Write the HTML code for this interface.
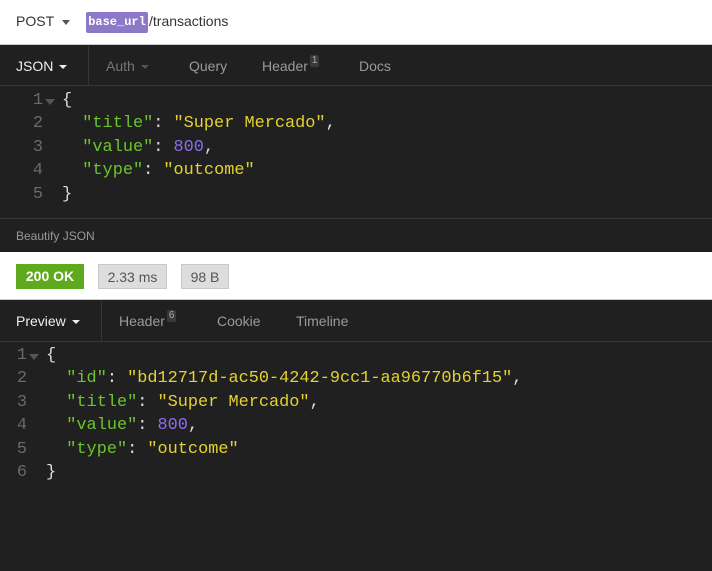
<!DOCTYPE html>
<html><head><style>
*{margin:0;padding:0;box-sizing:border-box}
body{width:712px;height:571px;overflow:hidden;background:#202020;font-family:"Liberation Sans",sans-serif;position:relative}
.abs{position:absolute}
.top{left:0;top:0;width:712px;height:45px;background:#fff;border-bottom:1px solid #ccc}
.tabs{left:0;width:712px;height:40px;border-bottom:1px solid #363636;font-size:14px;color:#9a9a9a}
.tab{position:absolute;top:0;height:40px;line-height:40px}
.act{color:#eee}
.caret{display:inline-block;width:0;height:0;border-left:4px solid transparent;border-right:4px solid transparent;border-top:4px solid currentColor;vertical-align:middle;margin-left:6px}
.badge{display:inline-block;background:#3a3a3a;color:#aaa;font-size:10px;line-height:12px;padding:0 2px;vertical-align:8px;margin-left:2px;border-radius:2px}
.code{font-family:"Liberation Mono",monospace;font-size:16.9px;line-height:23.4px;white-space:pre;color:#ddd}
.ln{color:#6a6a6a;text-align:right}
.k{color:#6cc42c}.s{color:#e3d230}.n{color:#8c6cf2}
.tri{position:absolute;width:0;height:0;border-left:5px solid transparent;border-right:5px solid transparent;border-top:6px solid #555}
.pill{position:absolute;top:264px;height:25px;line-height:25px;font-size:14px;text-align:center}
</style></head><body>
<div class="abs top">
 <span class="abs" style="left:16px;top:13px;font-size:14px;color:#333">POST</span>
 <span class="abs" style="left:62px;top:20px;width:0;height:0;border-left:4px solid transparent;border-right:4px solid transparent;border-top:5px solid #555"></span>
 <span class="abs" style="left:86px;top:12px;width:62px;height:21px;background:#8d78c8;border-radius:2px;color:#fff;font-family:'Liberation Mono',monospace;font-size:12px;font-weight:bold;line-height:21px;text-align:center">base_url</span>
 <span class="abs" style="left:149px;top:13px;font-size:14px;color:#333">/transactions</span>
</div>
<div class="abs tabs" style="top:46px">
 <div class="tab act" style="left:16px">JSON<span class="caret"></span></div>
 <div class="abs" style="left:88px;top:0;width:1px;height:40px;background:#363636"></div>
 <div class="tab" style="left:106px;color:#777">Auth<span class="caret" style="color:#555"></span></div>
 <div class="tab" style="left:189px">Query</div>
 <div class="tab" style="left:262px">Header<span class="badge">1</span></div>
 <div class="tab" style="left:359px">Docs</div>
</div>
<div class="abs code ln" style="left:0;width:43px;top:89px">1
2
3
4
5</div>
<div class="tri" style="left:45px;top:99px"></div>
<div class="abs code" style="left:62px;top:89px">{
  <span class="k">"title"</span>: <span class="s">"Super Mercado"</span>,
  <span class="k">"value"</span>: <span class="n">800</span>,
  <span class="k">"type"</span>: <span class="s">"outcome"</span>
}</div>
<div class="abs" style="left:0;top:218px;width:712px;height:34px;border-top:1px solid #363636;font-size:12px;color:#999;line-height:34px;padding-left:16px">Beautify JSON</div>
<div class="abs" style="left:0;top:252px;width:712px;height:48px;background:#fff;border-bottom:1px solid #ccc"></div>
<div class="pill" style="left:16px;width:68px;background:#5fa91f;color:#fff;font-weight:bold">200 OK</div>
<div class="pill" style="left:98px;width:69px;background:#ddd;border:1px solid #c8c8c8;color:#555">2.33 ms</div>
<div class="pill" style="left:181px;width:48px;background:#ddd;border:1px solid #c8c8c8;color:#555">98 B</div>
<div class="abs tabs" style="top:301px;height:41px">
 <div class="tab act" style="left:16px">Preview<span class="caret"></span></div>
 <div class="abs" style="left:101px;top:0;width:1px;height:41px;background:#363636"></div>
 <div class="tab" style="left:119px">Header<span class="badge">6</span></div>
 <div class="tab" style="left:217px">Cookie</div>
 <div class="tab" style="left:296px">Timeline</div>
</div>
<div class="abs code ln" style="left:0;width:27px;top:344px">1
2
3
4
5
6</div>
<div class="tri" style="left:29px;top:354px"></div>
<div class="abs code" style="left:46px;top:344px">{
  <span class="k">"id"</span>: <span class="s">"bd12717d-ac50-4242-9cc1-aa96770b6f15"</span>,
  <span class="k">"title"</span>: <span class="s">"Super Mercado"</span>,
  <span class="k">"value"</span>: <span class="n">800</span>,
  <span class="k">"type"</span>: <span class="s">"outcome"</span>
}</div>
</body></html>
